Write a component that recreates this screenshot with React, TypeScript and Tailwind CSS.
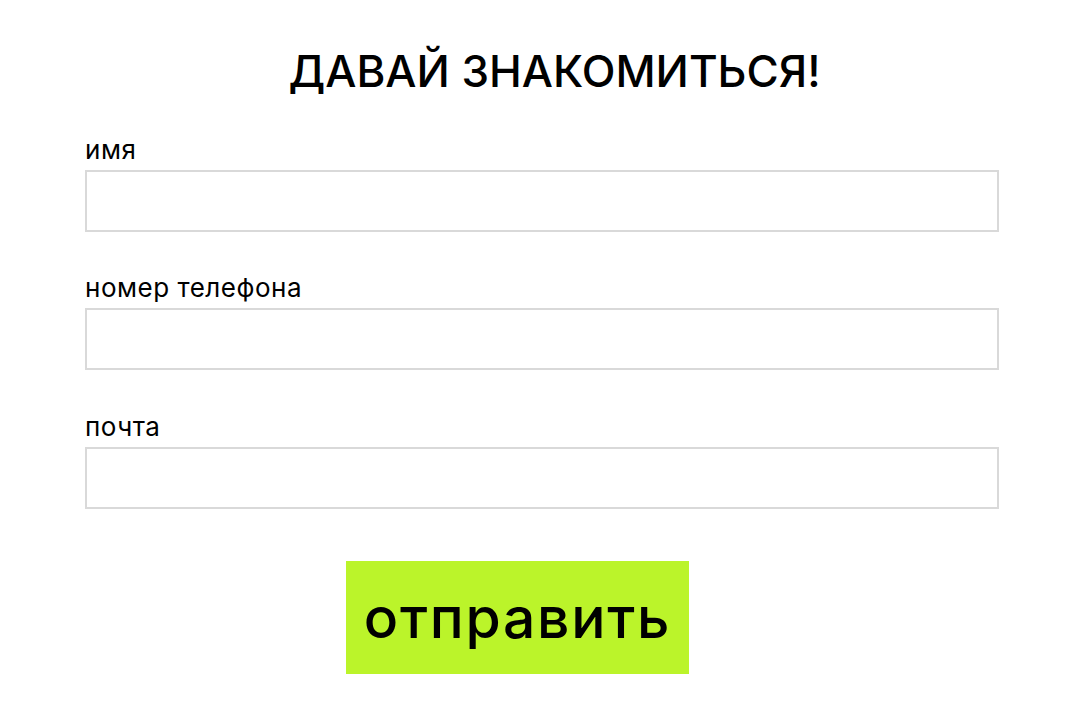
const fields = [
  { label: 'имя', type: 'text', gap: '' },
  { label: 'номер телефона', type: 'tel', gap: 'mt-[40px]' },
  { label: 'почта', type: 'email', gap: 'mt-[41px]' },
];

const App = () => {
  return (
    <div className="min-h-screen bg-white font-['Inter',sans-serif] text-black">
      <div className="ml-[85px] w-[914px] pt-[49px]">
        <h2 className="pl-[25px] text-center text-[44px] font-medium leading-[44px]">
          ДАВАЙ ЗНАКОМИТЬСЯ!
        </h2>

        <form className="mt-[41px] flex flex-col" onSubmit={(e) => e.preventDefault()}>
          {fields.map((field, index) => (
            <label key={index} className={`block ${field.gap}`}>
              <span className="block text-[26px] leading-[32px] tracking-[0.02em]">{field.label}</span>
              <input
                type={field.type}
                className="mt-[4px] block h-[62px] w-full border-2 border-[#d9d9d9] bg-white px-4 outline-none"
              />
            </label>
          ))}

          <button
            type="submit"
            className="ml-[261px] mt-[52px] flex h-[113px] w-[343px] items-center justify-center bg-[#bbf42a] text-[57px] font-medium tracking-[0.03em] text-black"
          >
            отправить
          </button>
        </form>
      </div>
    </div>
  );
};

export default App;
